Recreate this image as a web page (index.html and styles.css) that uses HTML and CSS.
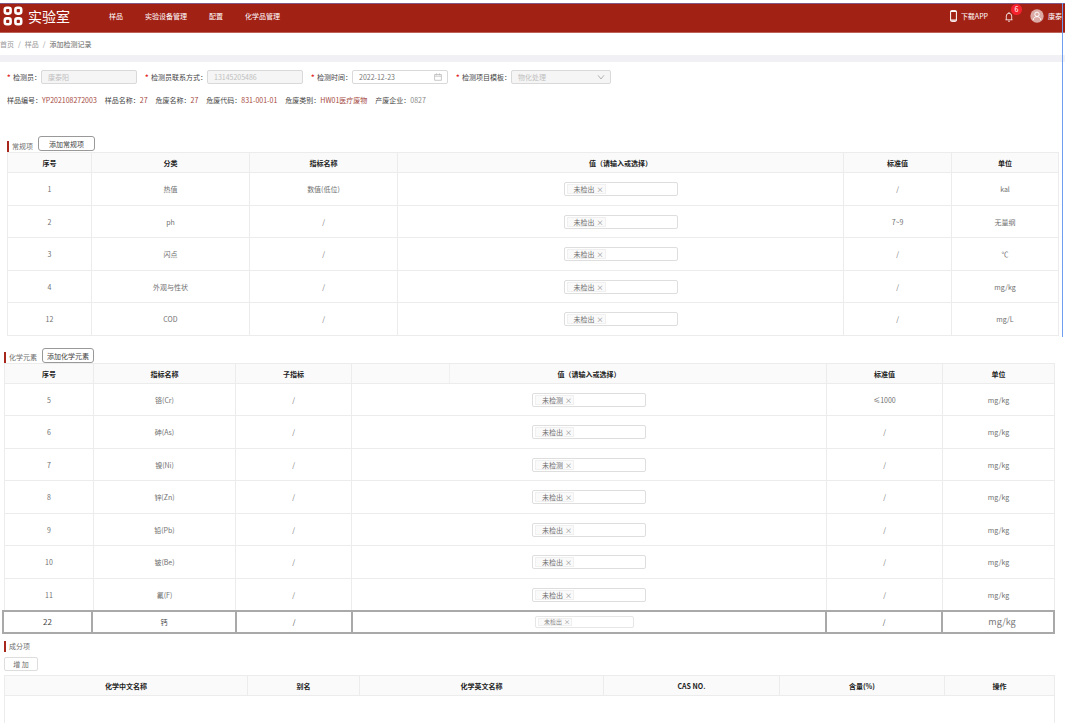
FILE: index.html
```html
<!DOCTYPE html>
<html lang="zh-CN">
<head>
<meta charset="utf-8">
<title>实验室</title>
<link rel="stylesheet" href="styles.css">
</head>
<body>
<div class="page">
<header class="topbar">
  <svg class="logo" viewBox="0 0 20 20" fill="none" stroke="#fff" stroke-width="2.6"><rect x="1.8" y="1.8" width="5.8" height="5.8" rx="2"/><rect x="12.4" y="1.8" width="5.8" height="5.8" rx="2"/><rect x="1.8" y="12.4" width="5.8" height="5.8" rx="2"/><rect x="12.4" y="12.4" width="5.8" height="5.8" rx="2"/></svg>
  <span class="brand">实验室</span>
  <nav class="menu"><a href="#">样品</a><a href="#">实验设备管理</a><a href="#">配置</a><a href="#">化学品管理</a></nav>
  <div class="tools">
    <a class="download" href="#"><svg class="phone" viewBox="0 0 7 12" fill="none" stroke="#fff"><rect x=".6" y=".6" width="5.8" height="10.8" rx=".8"/><path d="M.6 1.400h5.800M.6 10.200h5.800" stroke-width="1.2"/></svg>下载APP</a>
    <button class="bell" aria-label="通知"><svg viewBox="0 0 10 11" fill="none" stroke="#fff" stroke-width=".8"><path d="M1.500 8.800h7M2.300 8.800V5a2.700 2.700 0 0 1 5.400 0v3.800M5 2.200V1M4 10.200h2"/></svg><span class="badge">6</span></button>
    <a class="user" href="#"><svg viewBox="0 0 14 14"><circle cx="7" cy="7" r="6.700" fill="#dcaaa5"/><g fill="none" stroke="#fff" stroke-width="1"><circle cx="7" cy="5.300" r="2.200"/><path d="M3.200 11c.3-2.200 1.900-3.400 3.800-3.400s3.500 1.200 3.800 3.400"/></g></svg>康泰</a>
  </div>
</header>
<nav class="crumbs"><a href="#">首页</a><span>/</span><a href="#">样品</a><span>/</span><b>添加检测记录</b></nav>
<main>
<form class="form">
  <div class="field"><label for="f1"><i>*</i>检测员：</label><input id="f1" value="康泰阳" disabled></div>
  <div class="field"><label for="f2"><i>*</i>检测员联系方式：</label><input id="f2" value="13145205486" disabled></div>
  <div class="field"><label for="f3"><i>*</i>检测时间：</label><span class="control"><input id="f3" value="2022-12-23"><svg viewBox="0 0 8 8" fill="none" stroke="#bbb" stroke-width=".8"><path d="M.6 1.500h6.800v5.800H.6zM.6 3.200h6.800M2.500.4v1.800M5.500.4v1.800"/></svg></span></div>
  <div class="field"><label for="f4"><i>*</i>检测项目模板：</label><span class="control"><select id="f4" disabled><option>物化处理</option></select><svg viewBox="0 0 8 8" fill="none" stroke="#aaa" stroke-width=".9"><path d="M1 2.300l3 3.700 3-3.700"/></svg></span></div>
</form>
<div class="info">
  <span>样品编号：<em>YP202108272003</em></span><span>样品名称：<em>27</em></span><span>危废名称：<em>27</em></span><span>危废代码：<em>831-001-01</em></span><span>危废类别：<em>HW01医疗废物</em></span><span>产废企业：<em class="plain">0827</em></span>
</div>

<section class="block regular">
  <div class="head"><h2>常规项</h2><button class="add wide">添加常规项</button></div>
  <table>
    <colgroup><col class="w84"><col class="w158"><col class="w148"><col><col class="w108"><col class="w107"></colgroup>
    <thead><tr><th>序号</th><th>分类</th><th>指标名称</th><th>值（请输入或选择）</th><th>标准值</th><th>单位</th></tr></thead>
    <tbody>
      <tr><td>1</td><td>热值</td><td>数值(低位)</td><td><div class="pick"><span class="tag">未检出<button aria-label="移除">×</button></span><input aria-label="热值"></div></td><td>/</td><td>kal</td></tr>
      <tr><td>2</td><td>ph</td><td>/</td><td><div class="pick"><span class="tag">未检出<button aria-label="移除">×</button></span><input aria-label="ph"></div></td><td>7~9</td><td>无量纲</td></tr>
      <tr><td>3</td><td>闪点</td><td>/</td><td><div class="pick"><span class="tag">未检出<button aria-label="移除">×</button></span><input aria-label="闪点"></div></td><td>/</td><td>℃</td></tr>
      <tr><td>4</td><td>外观与性状</td><td>/</td><td><div class="pick"><span class="tag">未检出<button aria-label="移除">×</button></span><input aria-label="外观与性状"></div></td><td>/</td><td>mg/kg</td></tr>
      <tr><td>12</td><td>COD</td><td>/</td><td><div class="pick"><span class="tag">未检出<button aria-label="移除">×</button></span><input aria-label="COD"></div></td><td>/</td><td>mg/L</td></tr>
    </tbody>
  </table>
</section>

<section class="block elements">
  <div class="head"><h2>化学元素</h2><button class="add">添加化学元素</button></div>
  <table>
    <colgroup><col class="w89"><col class="w142"><col class="w116"><col><col class="w116"><col class="w112"></colgroup>
    <thead><tr><th>序号</th><th>指标名称</th><th>子指标</th><th class="split">值（请输入或选择）</th><th>标准值</th><th>单位</th></tr></thead>
    <tbody>
      <tr><td>5</td><td>铬(Cr)</td><td>/</td><td><div class="pick"><span class="tag">未检测<button aria-label="移除">×</button></span><input aria-label="铬"></div></td><td>≤1000</td><td>mg/kg</td></tr>
      <tr><td>6</td><td>砷(As)</td><td>/</td><td><div class="pick"><span class="tag">未检出<button aria-label="移除">×</button></span><input aria-label="砷"></div></td><td>/</td><td>mg/kg</td></tr>
      <tr><td>7</td><td>镍(Ni)</td><td>/</td><td><div class="pick"><span class="tag">未检测<button aria-label="移除">×</button></span><input aria-label="镍"></div></td><td>/</td><td>mg/kg</td></tr>
      <tr><td>8</td><td>锌(Zn)</td><td>/</td><td><div class="pick"><span class="tag">未检出<button aria-label="移除">×</button></span><input aria-label="锌"></div></td><td>/</td><td>mg/kg</td></tr>
      <tr><td>9</td><td>铅(Pb)</td><td>/</td><td><div class="pick"><span class="tag">未检出<button aria-label="移除">×</button></span><input aria-label="铅"></div></td><td>/</td><td>mg/kg</td></tr>
      <tr><td>10</td><td>铍(Be)</td><td>/</td><td><div class="pick"><span class="tag">未检出<button aria-label="移除">×</button></span><input aria-label="铍"></div></td><td>/</td><td>mg/kg</td></tr>
      <tr><td>11</td><td>氟(F)</td><td>/</td><td><div class="pick"><span class="tag">未检出<button aria-label="移除">×</button></span><input aria-label="氟"></div></td><td>/</td><td>mg/kg</td></tr>
    </tbody>
  </table>
</section>
<div class="marked">
<table>
  <colgroup><col class="w89"><col class="w144"><col class="w116"><col><col class="w116"><col class="w112"></colgroup>
  <tbody><tr><td class="num">22</td><td>钙</td><td>/</td><td><div class="pick small"><span class="tag">未检出<button aria-label="移除">×</button></span><input aria-label="钙"></div></td><td>/</td><td class="unit">mg/kg</td></tr></tbody>
</table>
</div>

<section class="block parts">
  <div class="head"><h2>成分项</h2></div>
  <button class="more">增 加</button>
  <table>
    <colgroup><col class="w243"><col class="w112"><col><col class="w176"><col class="w165"><col class="w110"></colgroup>
    <thead><tr><th>化学中文名称</th><th>别名</th><th>化学英文名称</th><th>CAS NO.</th><th>含量(%)</th><th>操作</th></tr></thead>
    <tbody><tr><td colspan="6" class="empty"></td></tr></tbody>
  </table>
</section>
</main>
<div class="guide"></div>
</div>
</body>
</html>
```
FILE: styles.css
```css
* { box-sizing: border-box; }
body {
  margin: 0;
  background: #fff;
  color: #707070;
  font: 7px/10px "Noto Sans CJK SC", sans-serif;
}
html, body { height: 100%; overflow: hidden; }
a { color: inherit; text-decoration: none; }
button, input, select { font: inherit; color: inherit; margin: 0; padding: 0; border: 0; background: none; }
.page { position: relative; height: 100%; overflow: hidden; padding-top: 3px; }

.topbar {
  display: flex;
  align-items: center;
  height: 30px;
  padding: 0 3px 4px;
  background: #a22115;
  border-top: 1px solid #7f5a86;
  border-bottom: 1px solid #bd6259;
  color: #fff;
  white-space: nowrap;
}
.logo { width: 20px; height: 20px; }
.brand { margin-left: 5px; font-size: 14px; line-height: 20px; }
.menu { display: flex; gap: 22px; margin-left: 39px; }
.tools { display: flex; align-items: center; margin-left: auto; }
.download, .user { display: flex; align-items: center; }
.download { gap: 4px; }
.phone { width: 7px; height: 12px; }
.bell { position: relative; width: 10px; height: 11px; margin: 0 16px 0 16px; }
.bell svg { display: block; width: 10px; height: 11px; }
.badge {
  position: absolute;
  left: 7px;
  top: -7px;
  width: 11px;
  height: 11px;
  border-radius: 50%;
  background: #f5222d;
  line-height: 11px;
  text-align: center;
}
.user { gap: 4px; }
.user svg { width: 14px; height: 14px; }

.crumbs {
  display: flex;
  gap: 4px;
  height: 29px;
  padding-top: 6px;
  border-bottom: 7px solid #f0f0f5;
  color: #999;
}
.crumbs b { font-weight: 400; color: #666; }

.form { display: flex; gap: 8px; padding: 8px 7px 0; }
.field { display: flex; align-items: center; white-space: nowrap; color: #444; }
.field label { display: flex; }
.field i { width: 6px; color: #e02020; font-style: normal; font-weight: 700; }
.field input, .field select {
  width: 96px;
  height: 14px;
  padding: 0 6px;
  border: 1px solid #d9d9d9;
  border-radius: 2px;
  color: #777;
}
.field select { width: 100px; appearance: none; }
.field :disabled { background: #f5f5f5; color: #c0c0c0; opacity: 1; }
.control { position: relative; display: flex; }
.control svg { position: absolute; right: 6px; top: 3px; width: 8px; height: 8px; }

.info { display: flex; gap: 8px; padding: 11px 7px 0; color: #444; white-space: nowrap; }
.info em { font-style: normal; color: #a5483e; }
.info .plain { color: #888; }

.head { display: flex; align-items: flex-end; }
h2 {
  margin: 0;
  padding: 0 0 0 3px;
  border-left: 2px solid #a8271c;
  font-size: 7px;
  font-weight: 400;
  line-height: 11px;
}
.add {
  height: 15px;
  margin: 0 0 1px 5px;
  padding: 0 4px;
  border: 1px solid #999;
  border-radius: 3px;
  line-height: 12px;
  color: #444;
}
.wide { padding: 0 10px; }

table { width: 100%; border-collapse: collapse; table-layout: fixed; }
th, td { padding: 0; border: 1px solid #ececec; text-align: center; }
th { height: 20px; background: #fafafa; color: #222; font-weight: 700; }
td { height: 33px; }
tr:nth-child(even) td { height: 32px; }
.w84 { width: 84px; }
.w89 { width: 89px; }
.w107 { width: 107px; }
.w108 { width: 108px; }
.w110 { width: 110px; }
.w112 { width: 112px; }
.w116 { width: 116px; }
.w142 { width: 142px; }
.w144 { width: 144px; }
.w148 { width: 148px; }
.w158 { width: 158px; }
.w165 { width: 165px; }
.w176 { width: 176px; }
.w243 { width: 243px; }
.split { background: linear-gradient(#f0f0f0, #f0f0f0) 97px 0 / 1px 100% no-repeat #fafafa; }

.pick {
  display: flex;
  align-items: center;
  width: 114px;
  height: 14px;
  margin: 0 auto;
  padding: 0 2px;
  border: 1px solid #dedede;
  border-radius: 2px;
}
.pick input { flex: 1; min-width: 0; height: 10px; }
.tag {
  display: flex;
  align-items: center;
  gap: 2px;
  height: 10px;
  padding: 0 2px 0 6px;
  border: 1px solid #f0f0f0;
  background: #fafafa;
  line-height: 8px;
}
.tag button { width: 6px; line-height: 8px; color: #888; }

.regular { padding: 31px 6px 0 7px; }
.elements { padding: 12px 10px 0 4px; }
.elements .add { margin-bottom: 0; }
.elements td { height: 32px; }
.elements tr:nth-child(even) td { height: 33px; }

.marked { margin-top: -1px; padding: 0 10px 0 2px; }
.marked td { height: 22px; border: 2px solid #a9a9a9; color: #444; }
.marked .num { font-size: 8px; }
.small { width: 99px; height: 12px; margin-left: 182px; border-color: #e6e6e6; color: #888; }
.small .tag { height: 8px; font-size: 6px; line-height: 6px; padding: 0 1px 0 5px; }
.small .tag button { line-height: 6px; }
.marked .unit { padding-left: 8px; color: #777; font-size: 9px; }

.parts { padding: 7px 10px 0 4px; }
.more {
  display: block;
  width: 34px;
  height: 14px;
  margin: 5px 0 4px;
  border: 1px solid #ddd;
  border-radius: 2px;
}
.parts .empty { height: 64px; }

.guide {
  position: absolute;
  right: 2px;
  top: 3px;
  width: 1px;
  height: 334px;
  background: #6f9df0;
}
```
